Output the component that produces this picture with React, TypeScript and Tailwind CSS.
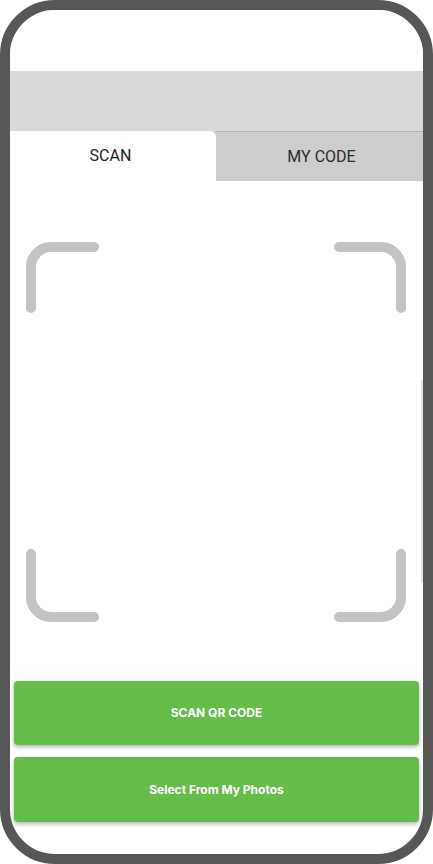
export default function App() {
  return (
    <div className="w-[433px] h-[864px] bg-white">
      <div className="relative w-[433px] h-[864px] rounded-[55px] border-[10px] border-[#575757] bg-white overflow-hidden flex flex-col">
        {/* status area */}
        <div className="h-[61px] shrink-0 bg-white" />

        {/* header */}
        <div className="h-[60px] shrink-0 bg-[#d9d9d9]" />

        {/* tabs */}
        <div className="flex h-[50px] shrink-0 bg-[#cdcdcd] font-['Roboto',sans-serif] text-[16px]">
          <div className="w-[206px] flex items-center justify-center pr-[5px] bg-white rounded-tr-[6px] text-[#222]">
            SCAN
          </div>
          <div className="flex-1 flex items-center justify-center pl-[4px] border-t border-[#aeb7b7] text-[#2a2a2a]">
            MY CODE
          </div>
        </div>

        {/* scan frame */}
        <div className="pt-[61px] pl-[16px]">
          <svg width="381" height="380" viewBox="0 0 381 380" fill="none" stroke="#c4c4c4" strokeWidth="10" strokeLinecap="round">
            <path d="M5 66 V25 A20 20 0 0 1 25 5 H68" />
            <path d="M313 5 H355 A20 20 0 0 1 375 25 V66" />
            <path d="M375 312 V355 A20 20 0 0 1 355 375 H313" />
            <path d="M5 312 V355 A20 20 0 0 0 25 375 H68" />
          </svg>
        </div>

        {/* actions */}
        <div className="mt-[59px] mx-[4px] flex flex-col gap-[12px] font-['Inter',sans-serif] text-[12px] font-bold text-white">
          <button className="h-[64px] rounded-[4px] bg-[#65bc48] shadow-[0_2px_4px_rgba(0,0,0,0.3)]">
            SCAN QR CODE
          </button>
          <button className="h-[65px] rounded-[4px] bg-[#65bc48] shadow-[0_2px_4px_rgba(0,0,0,0.3)]">
            Select From My Photos
          </button>
        </div>

        {/* scroll indicator */}
        <div className="absolute right-0 top-[370px] w-[2px] h-[203px] bg-[#e4e4e4]" />
      </div>
    </div>
  )
}
